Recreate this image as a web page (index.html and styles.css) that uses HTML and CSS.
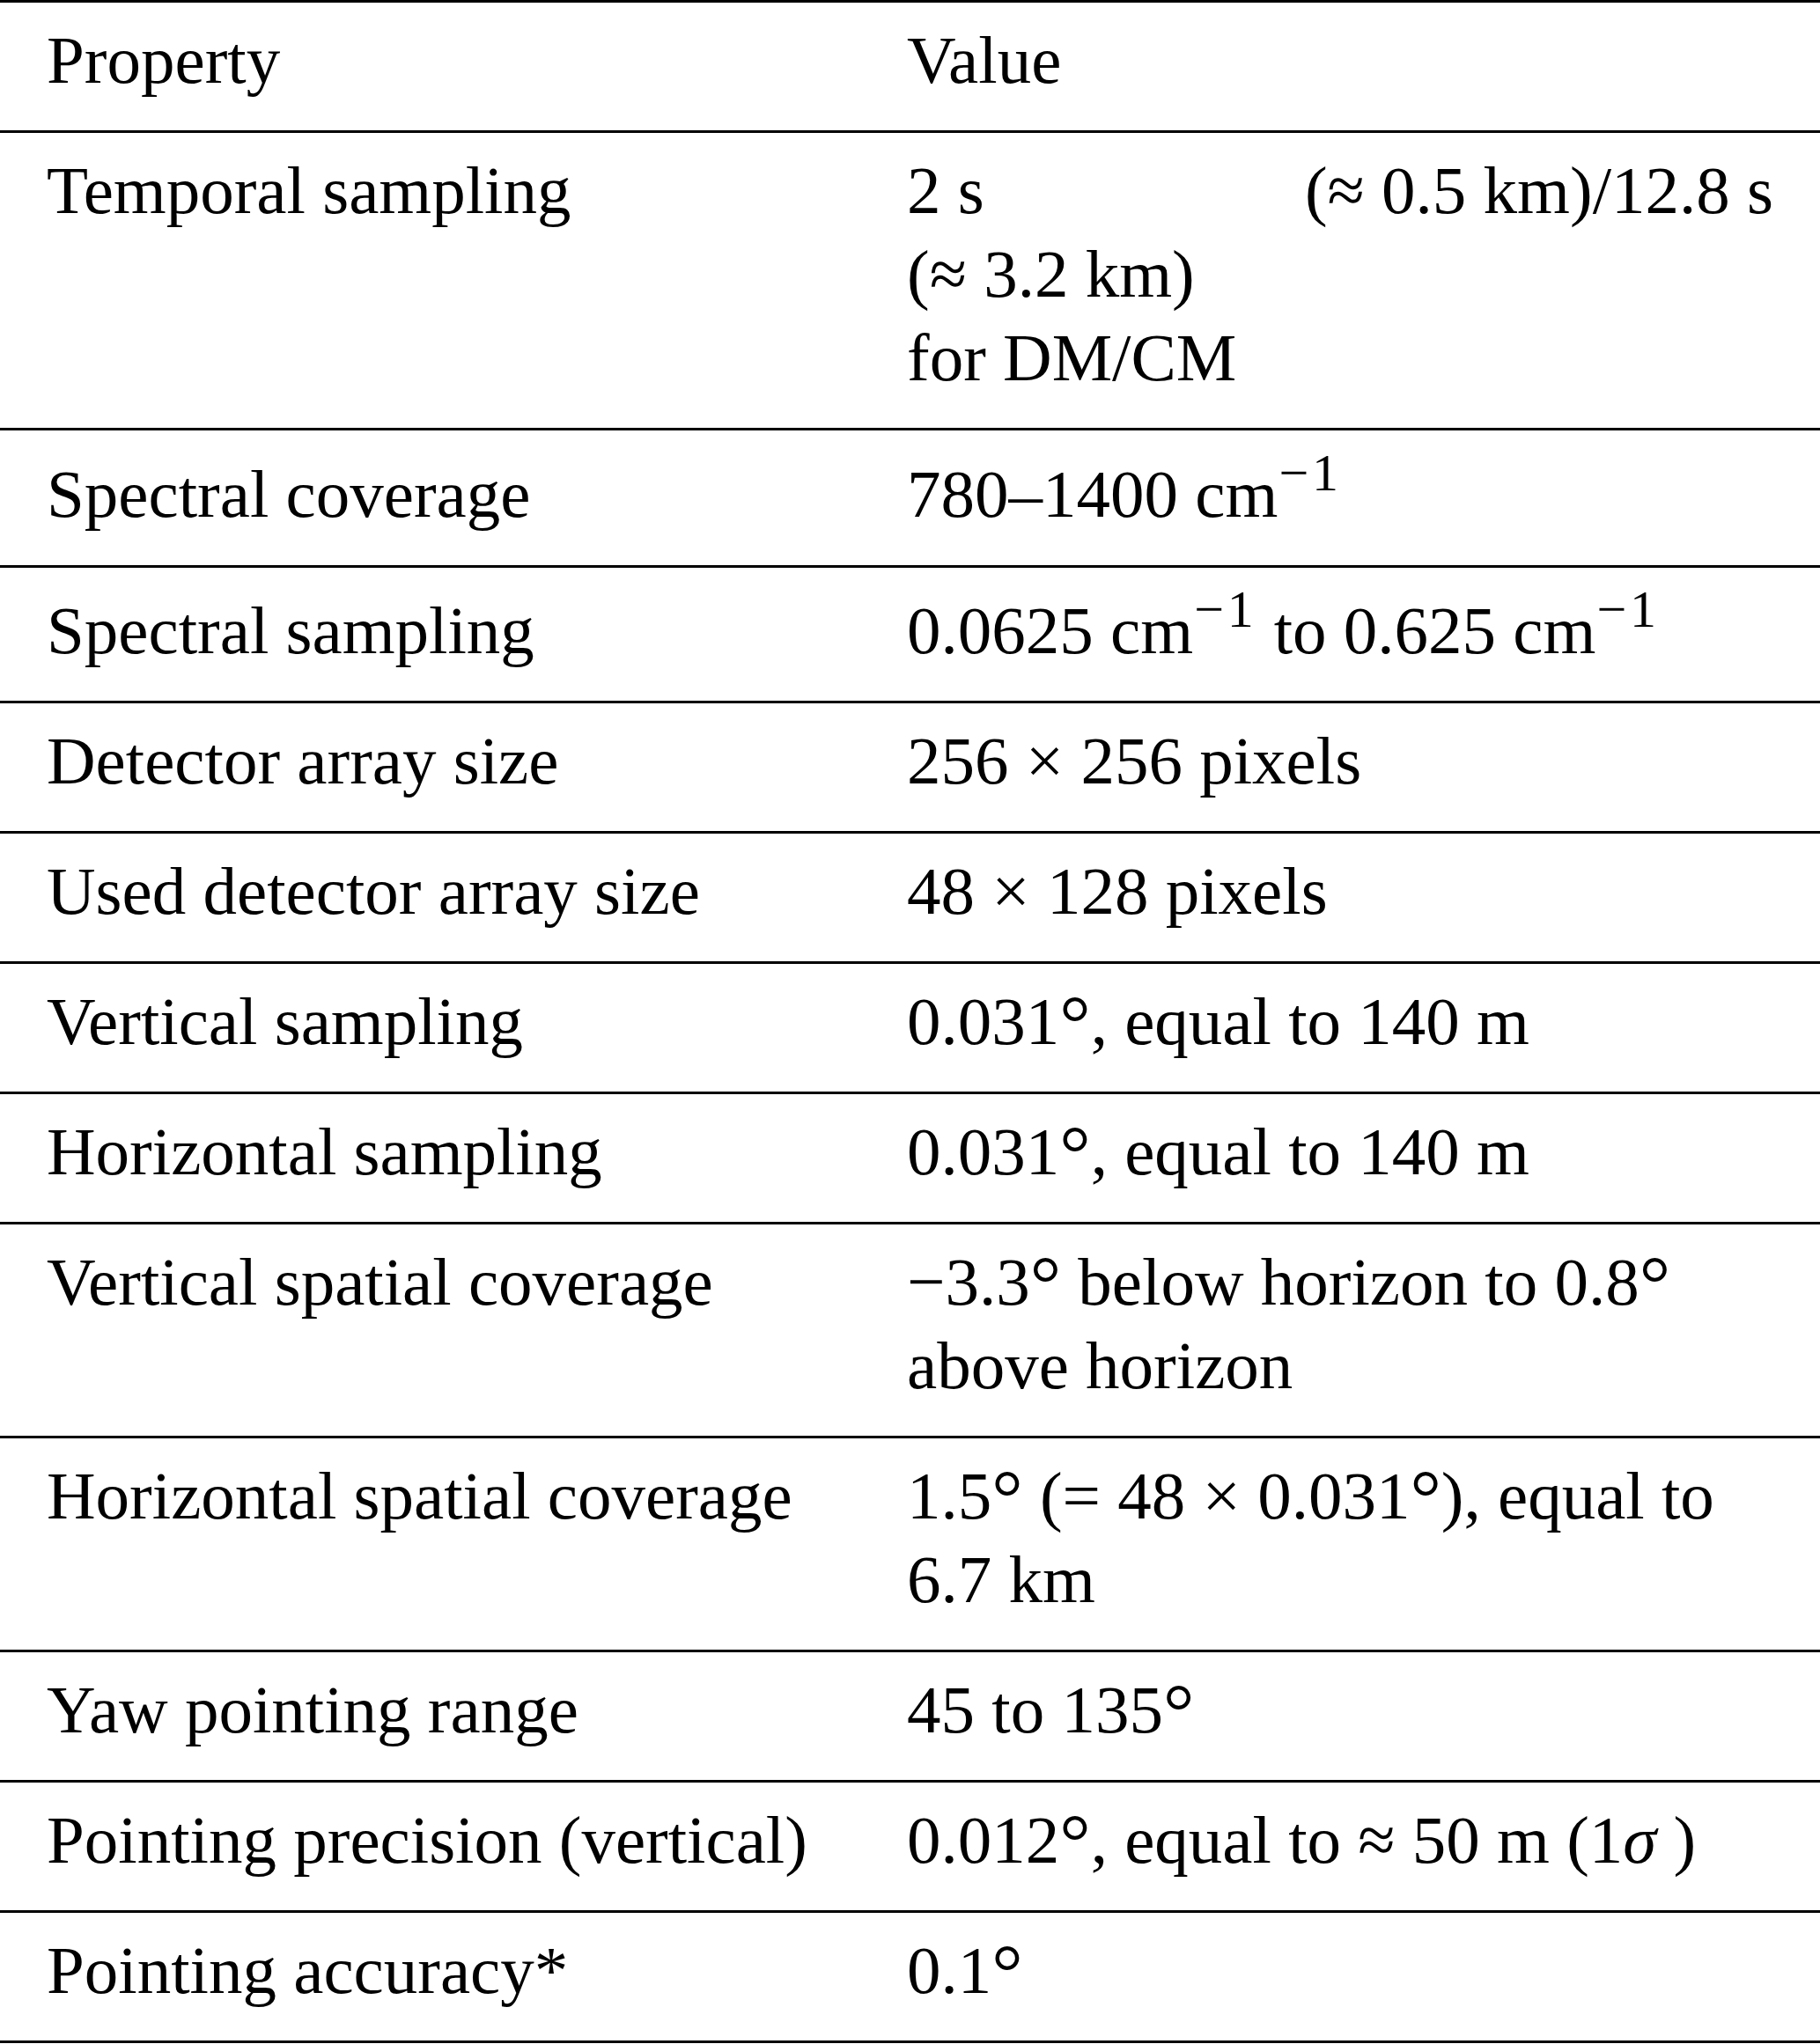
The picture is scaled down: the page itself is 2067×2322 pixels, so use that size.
FILE: index.html
```html
<!DOCTYPE html>
<html lang="en">
<head>
<meta charset="utf-8">
<title>Instrument properties</title>
<link rel="stylesheet" href="styles.css">
</head>
<body>
<div class="table">
  <div class="row head">
    <div class="cell">Property</div>
    <div class="cell">Value</div>
  </div>
  <div class="row">
    <div class="cell">Temporal sampling</div>
    <div class="cell">
      <div class="spread"><span>2 s</span><span>(≈ 0.5 km)/12.8 s</span></div>
      <div>(≈ 3.2 km)</div>
      <div>for DM/CM</div>
    </div>
  </div>
  <div class="row sup-a">
    <div class="cell">Spectral coverage</div>
    <div class="cell">780–1400 cm<span class="sup">−1</span></div>
  </div>
  <div class="row sup-b">
    <div class="cell">Spectral sampling</div>
    <div class="cell">0.0625 cm<span class="sup">−1</span> to 0.625 cm<span class="sup">−1</span></div>
  </div>
  <div class="row">
    <div class="cell">Detector array size</div>
    <div class="cell">256 × 256 pixels</div>
  </div>
  <div class="row">
    <div class="cell">Used detector array size</div>
    <div class="cell">48 × 128 pixels</div>
  </div>
  <div class="row">
    <div class="cell">Vertical sampling</div>
    <div class="cell">0.031<span class="deg">°</span>, equal to 140 m</div>
  </div>
  <div class="row">
    <div class="cell">Horizontal sampling</div>
    <div class="cell">0.031<span class="deg">°</span>, equal to 140 m</div>
  </div>
  <div class="row">
    <div class="cell">Vertical spatial coverage</div>
    <div class="cell">−3.3<span class="deg">°</span> below horizon to 0.8<span class="deg">°</span><br>above horizon</div>
  </div>
  <div class="row">
    <div class="cell">Horizontal spatial coverage</div>
    <div class="cell">1.5<span class="deg">°</span> (= 48 × 0.031<span class="deg">°</span>), equal to<br>6.7 km</div>
  </div>
  <div class="row">
    <div class="cell">Yaw pointing range</div>
    <div class="cell">45 to 135<span class="deg">°</span></div>
  </div>
  <div class="row">
    <div class="cell">Pointing precision (vertical)</div>
    <div class="cell">0.012<span class="deg">°</span>, equal to ≈ 50 m (1<i class="greek">σ</i>)</div>
  </div>
  <div class="row last">
    <div class="cell">Pointing accuracy*</div>
    <div class="cell">0.1<span class="deg">°</span></div>
  </div>
</div>
</body>
</html>
```
FILE: styles.css
```css
html, body {
  margin: 0;
  padding: 0;
  background: #ffffff;
}

body {
  font-family: "Liberation Serif", "Times New Roman", serif;
  font-size: 77px;
  line-height: 95px;
  color: #000000;
  width: 2067px;
}

.table {
  display: flex;
  flex-direction: column;
}

.row {
  display: grid;
  grid-template-columns: 872px 984px;
  column-gap: 105px;
  padding: 18px 53px 32px;
  border-top: 3px solid #000000;
}

.row.last {
  border-bottom: 3px solid #000000;
}

.row.sup-a {
  padding-top: 25px;
  padding-bottom: 33px;
}

.row.sup-b {
  padding-top: 24px;
  padding-bottom: 32px;
}

.spread {
  display: flex;
  justify-content: space-between;
}

.sup {
  font-size: 0.78em;
  line-height: 0;
  vertical-align: 0.5em;
  letter-spacing: 0.06em;
  margin-left: 0.02em;
}

.deg {
  font-size: 1.15em;
  vertical-align: -0.07em;
  line-height: 1;
}

.greek {
  font-style: italic;
  margin-right: 0.25em;
}
```
